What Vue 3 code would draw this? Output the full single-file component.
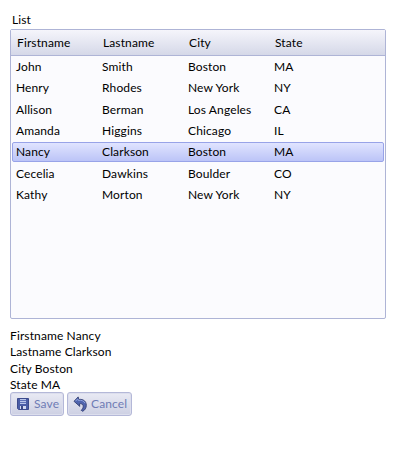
<script setup>
import { ref, computed } from 'vue'

const people = [
  ['John', 'Smith', 'Boston', 'MA'],
  ['Henry', 'Rhodes', 'New York', 'NY'],
  ['Allison', 'Berman', 'Los Angeles', 'CA'],
  ['Amanda', 'Higgins', 'Chicago', 'IL'],
  ['Nancy', 'Clarkson', 'Boston', 'MA'],
  ['Cecelia', 'Dawkins', 'Boulder', 'CO'],
  ['Kathy', 'Morton', 'New York', 'NY'],
]
const columns = ['Firstname', 'Lastname', 'City', 'State']
const selected = ref(4)
const person = computed(() => people[selected.value])
</script>

<template>
  <main class="page">
    <div class="title">List</div>
    <section class="grid">
      <div class="head">
        <span v-for="c in columns" :key="c">{{ c }}</span>
      </div>
      <div class="rows">
        <div
          v-for="(p, i) in people"
          :key="i"
          class="row"
          :class="{ selected: i === selected }"
          @click="selected = i"
        >
          <span v-for="(v, j) in p" :key="j">{{ v }}</span>
        </div>
      </div>
    </section>
    <div class="details">
      <div v-for="(c, i) in columns" :key="c">{{ c }} {{ person[i] }}</div>
    </div>
    <div class="buttons">
      <button class="btn save">
        <svg width="12" height="12" viewBox="0 0 12 12">
          <path d="M.5.5h11v11H1.500l-1-1z" fill="#4a5da6" stroke="#3c4a8c" />
          <path d="M3 1h6v5H3z" fill="#b9c5ea" />
          <path d="M3 2.500h6M3 4.500h6" stroke="#6073b8" />
          <path d="M3 8h6v3H3z" fill="#d3daf2" />
          <path d="M4 8h2v3H4z" fill="#3d4b88" />
        </svg>
        <span>Save</span>
      </button>
      <button class="btn cancel">
        <svg width="15" height="16" viewBox="0 0 15 16">
          <path
            d="M1 5.300 5.200.9 5.700 3.400C10.300 2.900 13.300 5.300 13.300 9.300c0 2.600-1.300 4.800-3.600 6l-1.500-1c1.600-1.400 2.300-3 2-4.500-.3-1.700-1.700-2.300-3.800-2l.4 2.600z"
            fill="#4f64ae" stroke="#343f73" stroke-width=".9" stroke-linejoin="round"
          />
          <path d="M2.500 5.200 4.700 2.900l.4 1.400c3.600-.3 5.900.6 7 2.900" fill="none" stroke="#8fa3e0" />
        </svg>
        <span>Cancel</span>
      </button>
    </div>
  </main>
</template>

<style>
body {
  background: #fff;
}
</style>

<style scoped>
.page {
  box-sizing: border-box;
  width: 408px;
  height: 450px;
  padding: 12px 22px 0 10px;
  font-family: Lato, 'Liberation Sans', sans-serif;
  font-size: 12px;
  line-height: 16px;
  letter-spacing: 0.12px;
  color: #000;
}
.title {
  height: 17px;
  padding-left: 2px;
}
.grid {
  box-sizing: border-box;
  height: 290px;
  border: 1px solid #aeb4d6;
  border-radius: 2px;
  background: #fbfbfe;
}
.head,
.row {
  display: grid;
  grid-template-columns: 86px 86px 86px 1fr;
  align-items: center;
}
.head {
  height: 25px;
  padding-left: 6px;
  border-bottom: 1px solid #aeb4d6;
  background: linear-gradient(#f5f5fb, #d5d8e8);
}
.rows {
  display: flex;
  flex-direction: column;
  gap: 1.31px;
  padding: 1.2px 1px 0;
}
.row {
  box-sizing: border-box;
  height: 20px;
  padding-left: 3px;
  border: 1px solid transparent;
  border-radius: 2px;
}
.row.selected {
  border-color: #98a3e8;
  background: linear-gradient(#e0e4ff, #bcc4f7);
}
.details {
  padding-top: 9px;
  line-height: 16.33px;
}
.buttons {
  display: flex;
  gap: 3px;
  margin-top: -1px;
}
.btn {
  box-sizing: border-box;
  display: flex;
  align-items: center;
  height: 24px;
  padding: 0;
  border: 1px solid #b4b8d8;
  border-radius: 3px;
  background: linear-gradient(#e9eaf4, #cdd0e3);
  box-shadow: inset 0 0 0 1px #dcdeed;
  font: inherit;
  letter-spacing: inherit;
  color: #6f7cb5;
}
.save {
  width: 54px;
  padding-left: 6px;
  gap: 5px;
}
.cancel {
  width: 65px;
  padding-left: 5px;
  gap: 3px;
}
</style>
